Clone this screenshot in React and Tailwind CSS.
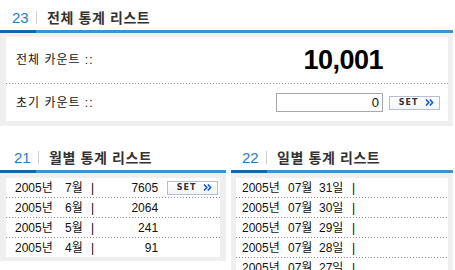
import React from 'react';

const FONT = 'font-["Liberation_Sans","Noto_Sans_CJK_KR",sans-serif]';
const DOTS = 'h-px bg-[image:repeating-linear-gradient(90deg,#8e8e8e_0px,#8e8e8e_1px,transparent_1px,transparent_3px)]';

const SetButton = () => (
  <button className="flex items-center justify-center gap-[7px] w-[51px] h-[14px] border border-[#b5bfca] bg-[linear-gradient(#ffffff,#f3f5f8)] pl-[4px]">
    <span className="font-['DejaVu_Sans',sans-serif] text-[8px] leading-none font-bold tracking-[1px] text-[#333]">SET</span>
    <svg width="9" height="7" viewBox="0 0 9 7">
      <path d="M1 0.5 L3.8 3.5 L1 6.5 M4.8 0.5 L7.6 3.5 L4.8 6.5" fill="none" stroke="#1557e8" strokeWidth="1.6" />
    </svg>
  </button>
);

const Header = ({ num, title, pad = 'pl-[12px]' }) => (
  <div>
    <div className={`flex items-center h-[30px] pt-[5px] ${pad}`}>
      <span className="text-[15px] leading-none text-[#2a7cc2] font-['Liberation_Sans',sans-serif] w-[16px]">{num}</span>
      <span className="ml-[8px] w-px h-[13px] bg-[#d2d2d2]" />
      <span className="ml-[10px] text-[14px] leading-none font-bold text-[#333] tracking-[0.6px]">{title}</span>
    </div>
    <div className="flex h-[3px]">
      <div className="w-[36px] bg-[#1666a9]" />
      <div className="flex-1 bg-[#3d93d0]" />
    </div>
  </div>
);

const months = [
  { m: '7월', v: '7605', set: true },
  { m: '6월', v: '2064' },
  { m: '5월', v: '241' },
  { m: '4월', v: '91' },
];

const days = ['31일', '30일', '29일', '28일', '27일', '26일'];

export default function App() {
  return (
    <div className={`${FONT} w-[455px] h-[270px] overflow-hidden bg-white text-[12px] text-[#111]`}>
      {/* 전체 통계 */}
      <div className="w-[453px]">
        <Header num="23" title="전체 통계 리스트" />
        <div className="bg-[#efefef] pt-[4px] pb-[5px] pl-[6px] pr-[5px]">
          <div className="bg-white">
            <div className="flex items-center justify-between h-[46px] pl-[10px] pr-[65px]">
              <span className="tracking-[1px]">전체 카운트 ::</span>
              <span className="font-['Liberation_Sans',sans-serif] font-bold text-[27px] leading-none tracking-[-0.5px] text-black">10,001</span>
            </div>
            <div className={DOTS} />
            <div className="flex items-center h-[37px] pl-[10px] pr-[8px]">
              <span className="flex-1 tracking-[1px]">초기 카운트 ::</span>
              <div className="w-[107px] h-[19px] border border-[#a5a9ae] flex items-center justify-end pr-[3px] text-[13px] leading-none">0</div>
              <div className="ml-[6px]"><SetButton /></div>
            </div>
          </div>
        </div>
      </div>

      {/* 하단 */}
      <div className="flex gap-[5px] mt-[14px] w-[453px]">
        <div className="w-[226px]">
          <Header num="21" title="월별 통계 리스트" pad="pl-[14px]" />
          <div className="bg-[#efefef] pt-[5px] pb-[4px] pl-[6px] pr-[6px]">
            <div className="bg-white">
              {months.map((r, i) => (
                <div key={r.m}>
                  {i > 0 && <div className={DOTS} />}
                  <div className="flex items-center h-[19px] pl-[9px]">
                    <span className="w-[50px]">2005년</span>
                    <span className="w-[26px]">{r.m}</span>
                    <span className="text-black">|</span>
                    <span className="w-[64px] text-right">{r.v}</span>
                    {r.set && <div className="ml-[9px]"><SetButton /></div>}
                  </div>
                </div>
              ))}
            </div>
          </div>
        </div>
        <div className="w-[222px]">
          <Header num="22" title="일별 통계 리스트" pad="pl-[11px]" />
          <div className="bg-[#efefef] pt-[5px] pl-[5px] pr-[5px] h-[200px]">
            <div className="bg-white">
              {days.map((d, i) => (
                <div key={d}>
                  {i > 0 && <div className={DOTS} />}
                  <div className="flex items-center h-[19px] pl-[6px]">
                    <span className="w-[46px]">2005년</span>
                    <span className="w-[31px]">07월</span>
                    <span className="w-[33px]">{d}</span>
                    <span className="text-black">|</span>
                  </div>
                </div>
              ))}
            </div>
          </div>
        </div>
      </div>
    </div>
  );
}
